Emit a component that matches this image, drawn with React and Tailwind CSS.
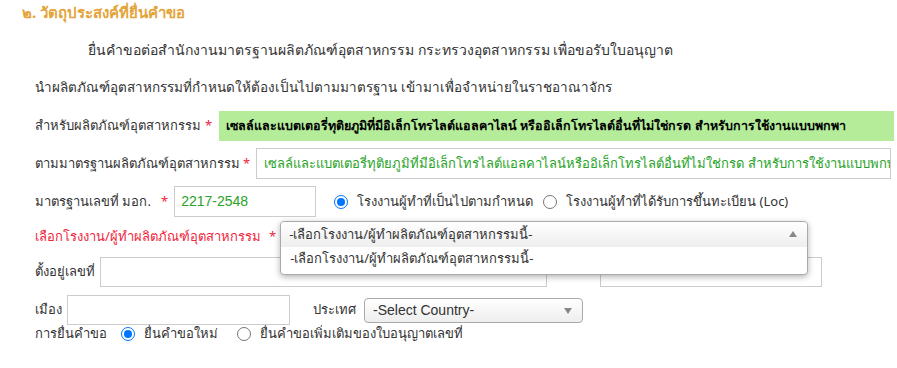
export default function App() {
  const font = { fontFamily: "Tahoma, 'Noto Sans', 'DejaVu Sans', sans-serif" };

  return (
    <div className="w-[897px] h-[368px] bg-white overflow-hidden text-[13px] text-[#333] whitespace-nowrap" style={font}>
      <div className="pl-[22px]">
        {/* section title */}
        <h2 className="text-[15px] font-bold text-[#e3a43a] h-[24px] leading-[24px]">
          ๒. วัตถุประสงค์ที่ยื่นคำขอ
        </h2>

        <div className="pl-[66px] mt-[14px] h-[24px] leading-[24px] text-[14px]">
          ยื่นคำขอต่อสำนักงานมาตรฐานผลิตภัณฑ์อุตสาหกรรม กระทรวงอุตสาหกรรม เพื่อขอรับใบอนุญาต
        </div>

        <div className="pl-[13px] mt-[13px] h-[24px] leading-[24px] text-[13.5px]">
          นำผลิตภัณฑ์อุตสาหกรรมที่กำหนดให้ต้องเป็นไปตามมาตรฐาน เข้ามาเพื่อจำหน่ายในราชอาณาจักร
        </div>

        <div className="pl-[13px] mt-[12px] flex items-center h-[30px]">
          <span className="shrink-0 w-[165px]">สำหรับผลิตภัณฑ์อุตสาหกรรม</span>
          <span className="text-[#f0243c] ml-[5px] shrink-0">*</span>
          <div className="ml-[7px] w-[675px] shrink-0 h-[30px] bg-[#b4ec9a] font-bold text-black text-[12.5px] flex items-center pl-[7px] overflow-hidden">
            เซลล์และแบตเตอรี่ทุติยภูมิที่มีอิเล็กโทรไลต์แอลคาไลน์ หรืออิเล็กโทรไลต์อื่นที่ไม่ใช่กรด สำหรับการใช้งานแบบพกพา
          </div>
        </div>

        <div className="pl-[13px] mt-[7px] flex items-center h-[31px]">
          <span className="shrink-0 w-[203px]">ตามมาตรฐานผลิตภัณฑ์อุตสาหกรรม</span>
          <span className="text-[#f0243c] ml-[5px] shrink-0">*</span>
          <div className="ml-[6px] w-[635px] shrink-0 h-[31px] border border-[#ccc] text-[#27a327] flex items-center pl-[7px] overflow-hidden">
            เซลล์และแบตเตอรี่ทุติยภูมิที่มีอิเล็กโทรไลต์แอลคาไลน์หรืออิเล็กโทรไลต์อื่นที่ไม่ใช่กรด สำหรับการใช้งานแบบพกพา
          </div>
        </div>

        <div className="pl-[13px] mt-[7px] flex items-center h-[31px]">
          <span className="shrink-0 w-[121px]">มาตรฐานเลขที่ มอก.</span>
          <span className="text-[#f0243c] ml-[5px] shrink-0">*</span>
          <div className="ml-[6px] w-[142px] shrink-0 h-[31px] border border-[#ccc] text-[#27a327] flex items-center pl-[6px] text-[14px]" style={{ fontFamily: "'Liberation Sans', sans-serif" }}>
            2217-2548
          </div>
          <Radio checked className="ml-[18px]" />
          <span className="ml-[9px] shrink-0 w-[175px]">โรงงานผู้ทำที่เป็นไปตามกำหนด</span>
          <Radio className="ml-[11px]" />
          <span className="ml-[9px]">โรงงานผู้ทำที่ได้รับการขึ้นทะเบียน (Loc)</span>
        </div>

        <div className="pl-[13px] mt-[8px] flex items-center h-[24px]">
          <span className="text-[#f0243c] shrink-0 w-[230px]">เลือกโรงงาน/ผู้ทำผลิตภัณฑ์อุตสาหกรรม</span>
          <span className="text-[#f0243c] ml-[4px] shrink-0">*</span>
          <div className="ml-[4px] relative w-[528px] h-[24px] shrink-0">
            <div className="absolute left-0 top-[-4px] w-[528px] h-[54px] rounded-[4px] border border-[#aaa] bg-white shadow-[0_2px_6px_rgba(0,0,0,0.3)] z-10">
              <div className="h-[25px] flex items-center pl-[8px] bg-gradient-to-b from-white to-[#eee] rounded-t-[4px] relative">
                -เลือกโรงงาน/ผู้ทำผลิตภัณฑ์อุตสาหกรรมนี้-
                <span className="absolute right-[10px] top-[9px] w-0 h-0 border-l-[4px] border-r-[4px] border-b-[6px] border-l-transparent border-r-transparent border-b-[#888]" />
              </div>
              <div className="h-[24px] flex items-center pl-[9px]">
                -เลือกโรงงาน/ผู้ทำผลิตภัณฑ์อุตสาหกรรมนี้-
              </div>
            </div>
          </div>
        </div>

        <div className="pl-[13px] mt-[8px] flex items-center h-[30px]">
          <span className="shrink-0 w-[61px]">ตั้งอยู่เลขที่</span>
          <div className="ml-[4px] w-[447px] shrink-0 h-[30px] border border-[#ccc]" />
          <div className="ml-[53px] w-[222px] shrink-0 h-[30px] border border-[#ccc]" />
        </div>

        <div className="pl-[13px] mt-[8px] flex items-center h-[30px]">
          <span className="shrink-0 w-[28px]">เมือง</span>
          <div className="ml-[4px] w-[223px] shrink-0 h-[30px] border border-[#ccc]" />
          <span className="ml-[23px] shrink-0 w-[44px]">ประเทศ</span>
          <div className="ml-[7px] w-[219px] shrink-0 h-[25px] rounded-[4px] border border-[#aaa] bg-gradient-to-b from-white to-[#eee] flex items-center pl-[8px] relative text-[14px]" style={{ fontFamily: "'Liberation Sans', sans-serif" }}>
            -Select Country-
            <span className="absolute right-[10px] top-[9px] w-0 h-0 border-l-[4px] border-r-[4px] border-t-[6px] border-l-transparent border-r-transparent border-t-[#888]" />
          </div>
        </div>

        <div className="pl-[13px] mt-[-2px] flex items-center h-[22px]">
          <span className="shrink-0 w-[70px]">การยื่นคำขอ</span>
          <Radio checked className="ml-[16px]" />
          <span className="ml-[9px] shrink-0 w-[80px]">ยื่นคำขอใหม่</span>
          <Radio className="ml-[13px]" />
          <span className="ml-[9px]">ยื่นคำขอเพิ่มเติมของใบอนุญาตเลขที่</span>
        </div>
      </div>
    </div>
  );
}

function Radio({ checked, className = "" }) {
  return (
    <span
      className={`inline-flex shrink-0 items-center justify-center w-[14px] h-[14px] rounded-full border ${
        checked ? "border-[#0075ff] bg-white" : "border-[#767676] bg-white"
      } ${className}`}
    >
      {checked && <span className="w-[8px] h-[8px] rounded-full bg-[#0075ff]" />}
    </span>
  );
}
